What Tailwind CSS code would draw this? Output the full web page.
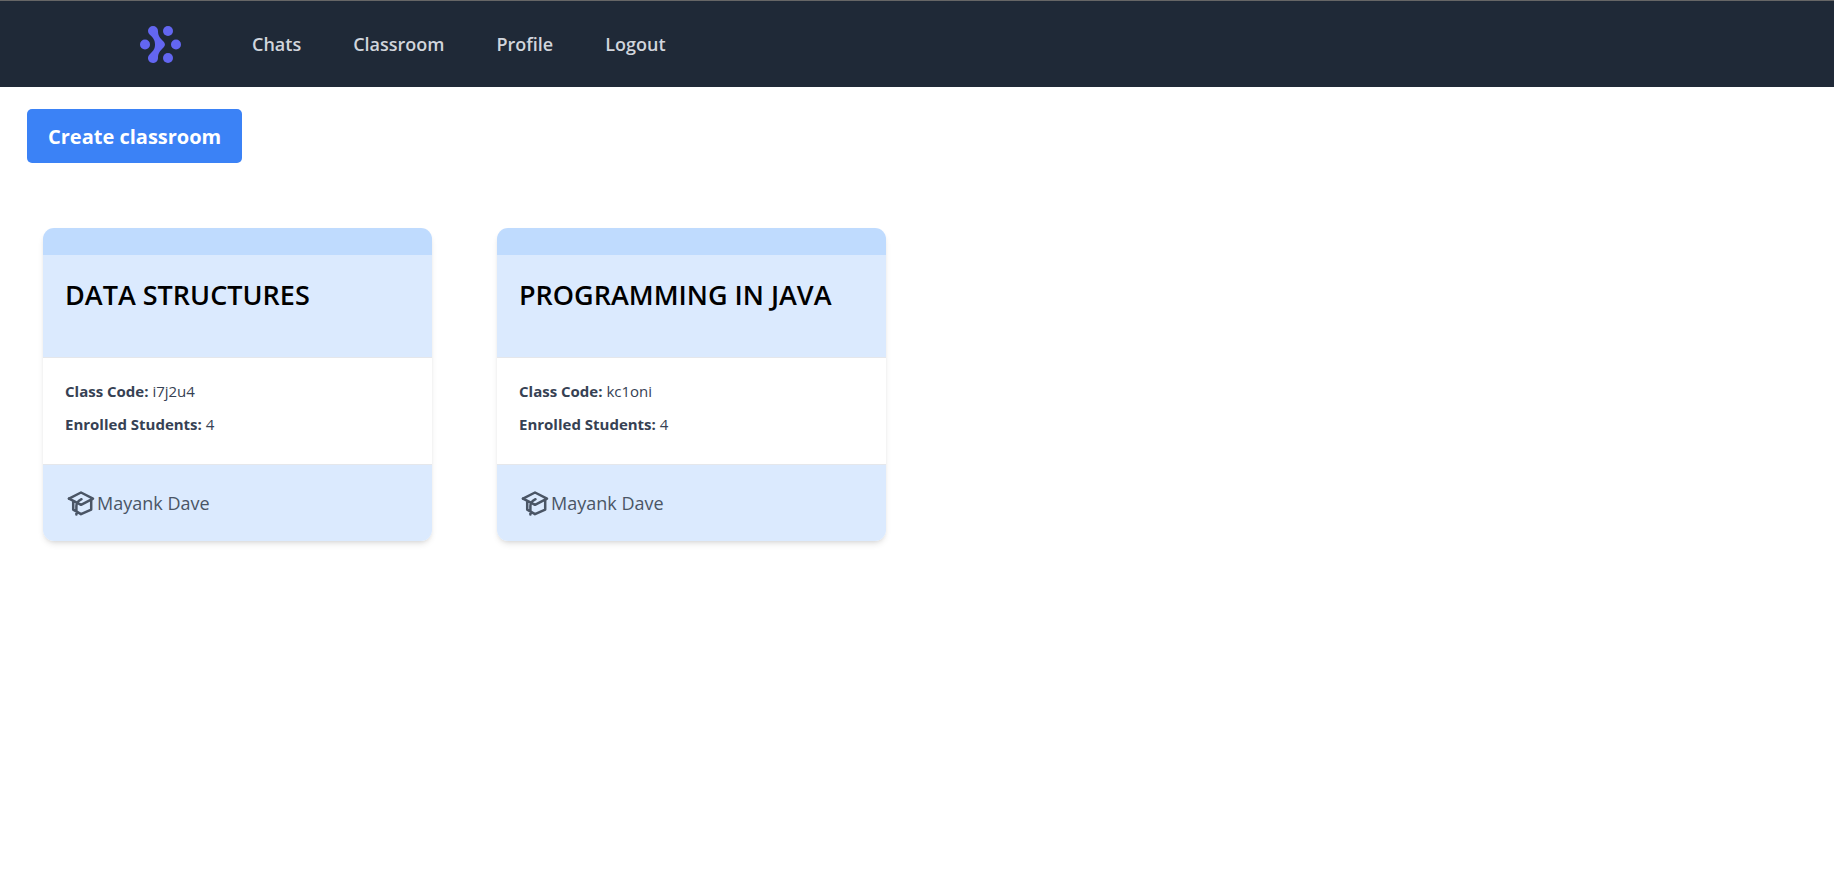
<!DOCTYPE html>
<html lang="en">
<head>
<meta charset="utf-8">
<title>Classroom</title>
<script src="https://cdn.jsdelivr.net/npm/@tailwindcss/browser@4"></script>
</head>
<body class="min-h-screen bg-white font-['Segoe_UI','Open_Sans',sans-serif]">
<svg class="hidden" aria-hidden="true">
  <symbol id="cap" viewBox="0 0 28 28">
    <g fill="none" stroke="currentColor" stroke-width="2.500" stroke-linejoin="round" stroke-linecap="round">
      <path d="M2 9.600 14 3.500 26 9.600 14 15.800 10.400 13.800Q11.200 11.800 14.500 10.200"/>
      <path d="M2 9.600 10.400 13.800M6.200 12V20.600L14 25.200 24.200 20.600V11M10.400 13.800Q9.400 15 9.400 17V25.500"/>
    </g>
  </symbol>
</svg>
<nav class="flex h-[87px] items-center border-t border-[#666666] bg-[#1f2937] pl-[140px]">
  <a href="#" aria-label="Home" class="mr-[44px]">
    <svg class="h-[40px] w-[42px]" viewBox="0 0 42 40" fill="#6366f1">
      <circle cx="5" cy="20.500" r="5"/><circle cx="36" cy="20.500" r="5"/>
      <circle cx="28" cy="7" r="5"/><circle cx="28" cy="34" r="5"/>
      <path d="M8 7a5 5 0 0 1 10 0c0 5 2 7 5.500 10.500a4.300 4.300 0 0 1 0 6C20 27 18 29 18 34a5 5 0 1 1-8.200-3.800C14 26.500 15 24 15 20.500S14 14.500 9.800 10.800A5 5 0 0 1 8 7Z"/>
    </svg>
  </a>
  <div class="flex text-[18px] leading-[27px] font-semibold text-gray-300">
    <a href="#" class="px-[26px]">Chats</a>
    <a href="#" class="px-[26px]">Classroom</a>
    <a href="#" class="px-[26px]">Profile</a>
    <a href="#" class="px-[26px]">Logout</a>
  </div>
</nav>
<main>
  <div class="px-[27px] pt-[22px]">
    <button type="button" class="h-[54px] rounded-[5px] bg-[#3b82f6] px-[21px] pt-[2px] text-[20px] font-bold text-white">Create classroom</button>
  </div>
  <div class="grid grid-cols-4 gap-[65px] pt-[65px] pr-[40px] pl-[43px]">
    <article class="overflow-hidden rounded-[11px] bg-white shadow-md">
      <div class="h-[27px] bg-[#bfdbfe]"></div>
      <div class="h-[103px] border-b border-gray-200 bg-[#dbeafe] px-[22px] pt-[22px]">
        <h2 class="text-[27px] leading-[36px] font-semibold whitespace-nowrap text-black">DATA STRUCTURES</h2>
      </div>
      <div class="flex h-[106px] flex-col gap-[9px] px-[22px] pt-[21px] text-[15px] leading-[24px] text-gray-700">
        <p><strong class="font-bold">Class Code:</strong> i7j2u4</p>
        <p><strong class="font-bold">Enrolled Students:</strong> 4</p>
      </div>
      <div class="flex h-[77px] items-center border-t border-gray-200 bg-[#dbeafe] px-[22px] text-[18px] text-gray-600">
        <svg class="ml-[2px] h-[28px] w-[28px]"><use href="#cap"/></svg>
        <span class="pl-[2px]">Mayank Dave</span>
      </div>
    </article>
    <article class="overflow-hidden rounded-[11px] bg-white shadow-md">
      <div class="h-[27px] bg-[#bfdbfe]"></div>
      <div class="h-[103px] border-b border-gray-200 bg-[#dbeafe] px-[22px] pt-[22px]">
        <h2 class="text-[27px] leading-[36px] font-semibold whitespace-nowrap text-black">PROGRAMMING IN JAVA</h2>
      </div>
      <div class="flex h-[106px] flex-col gap-[9px] px-[22px] pt-[21px] text-[15px] leading-[24px] text-gray-700">
        <p><strong class="font-bold">Class Code:</strong> kc1oni</p>
        <p><strong class="font-bold">Enrolled Students:</strong> 4</p>
      </div>
      <div class="flex h-[77px] items-center border-t border-gray-200 bg-[#dbeafe] px-[22px] text-[18px] text-gray-600">
        <svg class="ml-[2px] h-[28px] w-[28px]"><use href="#cap"/></svg>
        <span class="pl-[2px]">Mayank Dave</span>
      </div>
    </article>
  </div>
</main>
</body>
</html>
